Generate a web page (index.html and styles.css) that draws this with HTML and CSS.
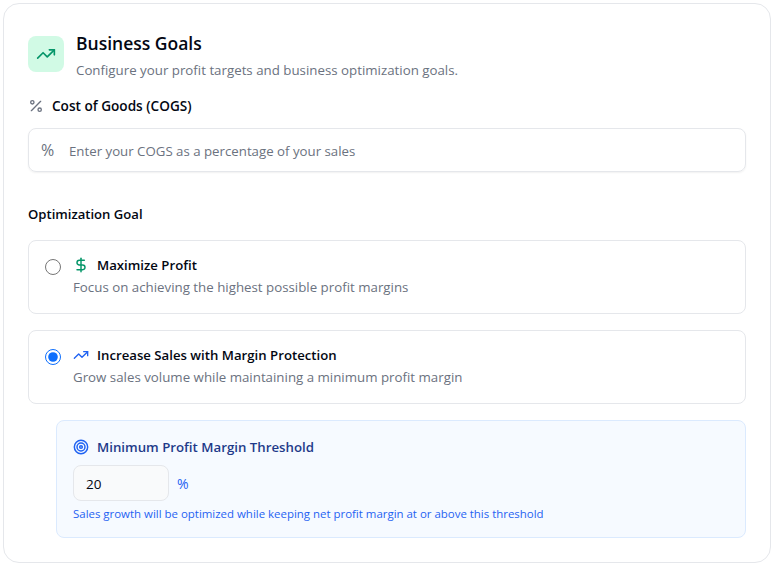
FILE: index.html
```html
<!DOCTYPE html>
<html lang="en">
<head>
    <meta charset="UTF-8">
    <meta name="viewport" content="width=device-width, initial-scale=1.0">
    <title>Business Goals</title>
    <link rel="stylesheet" href="styles.css">
</head>
<body>
    <div class="card">
        <div class="header">
            <div class="header-icon">
                <svg width="20" height="20" viewBox="0 0 24 24" fill="none" stroke="#059669" stroke-width="2" stroke-linecap="round" stroke-linejoin="round"><polyline points="22 7 13.5 15.5 8.5 10.5 2 17"/><polyline points="16 7 22 7 22 13"/></svg>
            </div>
            <div>
                <h1 class="title">Business Goals</h1>
                <p class="subtitle">Configure your profit targets and business optimization goals.</p>
            </div>
        </div>

        <label class="field-label" for="cogs">
            <svg width="16" height="16" viewBox="0 0 24 24" fill="none" stroke="#6b7280" stroke-width="2" stroke-linecap="round" stroke-linejoin="round"><line x1="19" y1="5" x2="5" y2="19"/><circle cx="6.5" cy="6.5" r="2.5"/><circle cx="17.5" cy="17.5" r="2.5"/></svg>
            Cost of Goods (COGS)
        </label>
        <div class="cogs-box">
            <span class="cogs-unit">%</span>
            <input class="cogs-input" id="cogs" type="text" placeholder="Enter your COGS as a percentage of your sales">
        </div>

        <div class="section-label">Optimization Goal</div>

        <label class="option">
            <input class="option-radio" type="radio" name="goal">
            <span class="option-body">
                <span class="option-title">
                    <svg width="16" height="16" viewBox="0 0 24 24" fill="none" stroke="#059669" stroke-width="2.2" stroke-linecap="round" stroke-linejoin="round"><line x1="12" y1="2" x2="12" y2="22"/><path d="M17 5H9.5a3.5 3.5 0 0 0 0 7h5a3.5 3.5 0 0 1 0 7H6"/></svg>
                    Maximize Profit
                </span>
                <span class="option-desc">Focus on achieving the highest possible profit margins</span>
            </span>
        </label>

        <label class="option">
            <input class="option-radio" type="radio" name="goal" checked>
            <span class="option-body">
                <span class="option-title">
                    <svg width="16" height="16" viewBox="0 0 24 24" fill="none" stroke="#1f62f2" stroke-width="2" stroke-linecap="round" stroke-linejoin="round"><polyline points="22 7 13.5 15.5 8.5 10.5 2 17"/><polyline points="16 7 22 7 22 13"/></svg>
                    Increase Sales with Margin Protection
                </span>
                <span class="option-desc">Grow sales volume while maintaining a minimum profit margin</span>
            </span>
        </label>

        <div class="threshold">
            <div class="threshold-title">
                <svg width="16" height="16" viewBox="0 0 24 24" fill="none" stroke="#1f62f2" stroke-width="2.2" stroke-linecap="round" stroke-linejoin="round"><circle cx="12" cy="12" r="10"/><circle cx="12" cy="12" r="6"/><circle cx="12" cy="12" r="2"/></svg>
                Minimum Profit Margin Threshold
            </div>
            <div class="threshold-row">
                <input class="threshold-input" type="text" value="20">
                <span class="threshold-unit">%</span>
            </div>
            <p class="threshold-note">Sales growth will be optimized while keeping net profit margin at or above this threshold</p>
        </div>
    </div>
</body>
</html>
```

FILE: styles.css
```css
* {
    box-sizing: border-box;
}
body {
    margin: 0;
    padding: 3px;
    background-color: #FFFFFF;
    font-family: "Open Sans", "Noto Sans", sans-serif;
    color: #030712;
}
.card {
    height: 560px;
    padding: 32px 24px 24px;
    border: 1px solid #e5e7eb;
    border-radius: 16px;
}
.header {
    display: flex;
    gap: 12px;
}
.header-icon {
    width: 36px;
    height: 36px;
    border-radius: 8px;
    background-color: #d1fae5;
    display: flex;
    align-items: center;
    justify-content: center;
}
.title {
    margin: -1px 0 0;
    font-size: 17.5px;
    line-height: 16px;
    font-weight: 600;
}
.subtitle {
    margin: 9px 0 0;
    font-size: 13.3px;
    line-height: 20px;
    color: #6b7280;
}
.field-label {
    display: flex;
    align-items: center;
    gap: 8px;
    margin-top: 16px;
    font-size: 13.6px;
    line-height: 20px;
    font-weight: 600;
}
.cogs-box {
    display: flex;
    align-items: center;
    height: 44px;
    margin-top: 12px;
    padding: 0 12px;
    border: 1px solid #e5e7eb;
    border-radius: 8px;
    box-shadow: 0 1px 2px rgba(0, 0, 0, 0.06);
}
.cogs-unit {
    width: 28px;
    font-size: 16px;
    color: #6b7280;
}
.cogs-input {
    flex: 1;
    border: none;
    outline: none;
    padding: 2px 0 0;
    font: inherit;
    font-size: 13.25px;
}
.cogs-input::placeholder {
    color: #6b7280;
    opacity: 1;
}
.section-label {
    margin-top: 32px;
    font-size: 13.1px;
    line-height: 20px;
    font-weight: 600;
}
.option {
    display: flex;
    align-items: flex-start;
    gap: 12px;
    height: 74px;
    margin-top: 16px;
    padding: 14px 16px;
    border: 1px solid #e5e7eb;
    border-radius: 8px;
}
.option-radio {
    width: 16px;
    height: 16px;
    margin: 4px 0 0;
    accent-color: #0d6efd;
}
.option-body {
    display: flex;
    flex-direction: column;
    gap: 2px;
}
.option-title {
    display: flex;
    align-items: center;
    gap: 8px;
    font-size: 13.2px;
    line-height: 20px;
    font-weight: 600;
}
.option-desc {
    font-size: 13.3px;
    line-height: 20px;
    color: #6b7280;
}
.threshold {
    margin: 16px 0 0 28px;
    padding: 16px;
    height: 118px;
    border: 1px solid #dbeafe;
    border-radius: 8px;
    background-color: #f6faff;
}
.threshold-title {
    display: flex;
    align-items: center;
    gap: 8px;
    font-size: 13.25px;
    line-height: 20px;
    font-weight: 600;
    color: #1e3a8a;
}
.threshold-row {
    display: flex;
    align-items: center;
    gap: 8px;
    margin-top: 8px;
}
.threshold-input {
    width: 96px;
    height: 36px;
    padding: 2px 12px 0;
    border: 1px solid #e5e7eb;
    border-radius: 8px;
    background-color: #f9fafb;
    font: inherit;
    font-size: 13.5px;
    color: #030712;
    outline: none;
}
.threshold-unit {
    font-size: 14px;
    color: #1f62f2;
}
.threshold-note {
    margin: 3px 0 0;
    font-size: 11.45px;
    line-height: 20px;
    color: #1f62f2;
}
```
